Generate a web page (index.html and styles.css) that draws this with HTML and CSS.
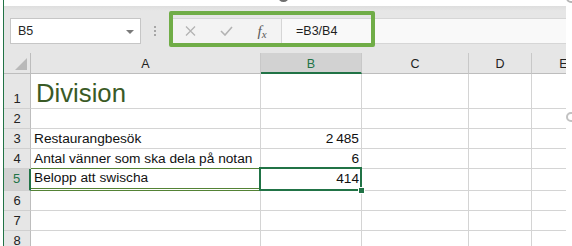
FILE: index.html
```html
<!DOCTYPE html>
<html lang="sv">
<head>
<meta charset="utf-8">
<title>Division</title>
<link rel="stylesheet" href="styles.css">
</head>
<body>
<div class="window">
  <div class="edge"></div>
  <div class="excel">
    <div class="topstrip"></div>
    <div class="toolbar">
      <div class="namebox"><span class="ref">B5</span><span class="caret"></span></div>
      <div class="dots"><i></i><i></i><i></i></div>
      <div class="fbar">
        <div class="fbtns">
          <span class="slot">
            <svg width="11" height="10" viewBox="0 0 11 10"><path d="M1 0.5 L10 9.5 M10 0.5 L1 9.5" stroke="#b3b3b3" stroke-width="1.3" fill="none"/></svg>
          </span>
          <span class="slot">
            <svg width="13" height="10" viewBox="0 0 13 10"><path d="M1 5 L5 9 L12 1" stroke="#b3b3b3" stroke-width="1.6" fill="none"/></svg>
          </span>
          <span class="slot fx"><span class="f">f</span><span class="x">x</span></span>
        </div>
        <div class="finput">=B3/B4</div>
      </div>
    </div>
    <div class="sheetwrap">
    <div class="sheet">
      <div class="corner">
        <svg width="12" height="12" viewBox="0 0 12 12"><polygon points="12,0 12,12 0,12" fill="#b9b9b9"/></svg>
      </div>
      <div class="colhead">A</div>
      <div class="colhead sel">B</div>
      <div class="colhead">C</div>
      <div class="colhead">D</div>
      <div class="colhead">E</div>

      <div class="rowhead">1</div>
      <div class="cell title">Division</div>
      <div class="cell"></div><div class="cell"></div><div class="cell"></div><div class="cell"></div>

      <div class="rowhead">2</div>
      <div class="cell"></div><div class="cell"></div><div class="cell"></div><div class="cell"></div><div class="cell"></div>

      <div class="rowhead">3</div>
      <div class="cell">Restaurangbesök</div>
      <div class="cell num">2&#8239;485</div>
      <div class="cell"></div><div class="cell"></div><div class="cell"></div>

      <div class="rowhead">4</div>
      <div class="cell total-above">Antal vänner som ska dela på notan</div>
      <div class="cell num">6</div>
      <div class="cell"></div><div class="cell"></div><div class="cell"></div>

      <div class="rowhead sel">5</div>
      <div class="cell total">Belopp att swischa</div>
      <div class="cell num active">414<span class="selbox"></span><span class="handle"></span></div>
      <div class="cell"></div><div class="cell"></div><div class="cell"></div>

      <div class="rowhead">6</div>
      <div class="cell"></div><div class="cell"></div><div class="cell"></div><div class="cell"></div><div class="cell"></div>

      <div class="rowhead">7</div>
      <div class="cell"></div><div class="cell"></div><div class="cell"></div><div class="cell"></div><div class="cell"></div>

      <div class="rowhead">8</div>
      <div class="cell"></div><div class="cell"></div><div class="cell"></div><div class="cell"></div><div class="cell"></div>
    </div>
    </div>
  </div>
  <div class="highlight"></div>
  <div class="ring ring-top"></div>
  <div class="ring ring-corner"></div>
  <div class="ring ring-side"></div>
</div>
</body>
</html>
```

FILE: styles.css
```css
* { box-sizing: border-box; }

html, body {
  margin: 0;
  padding: 0;
  background: #ffffff;
}

body {
  width: 572px;
  height: 246px;
  overflow: hidden;
  font-family: "Liberation Sans", Arial, sans-serif;
  color: #1a1a1a;
}

.window {
  position: relative;
  display: flex;
  width: 572px;
  height: 246px;
  overflow: hidden;
  background: #ffffff;
}

.edge {
  width: 4px;
  flex: none;
  border-left: 3px solid #ffffff;
  background: #217346;
}

.excel {
  width: 562px;
  flex: none;
  display: flex;
  flex-direction: column;
  overflow: hidden;
}

.topstrip {
  height: 6px;
  flex: none;
  background: #ffffff;
}

.toolbar {
  height: 47px;
  flex: none;
  display: flex;
  align-items: flex-start;
  padding: 12px 0 0 6px;
  background: linear-gradient(#dedede, #e6e6e6 5px);
}

.namebox {
  width: 131px;
  height: 26px;
  flex: none;
  background: #ffffff;
  border: 1px solid #c6c6c6;
  display: flex;
  align-items: center;
  justify-content: space-between;
  padding: 0 6px 0 7px;
  font-size: 12.5px;
  color: #262626;
}

.caret {
  width: 0;
  height: 0;
  border-left: 4px solid transparent;
  border-right: 4px solid transparent;
  border-top: 4px solid #7a7a7a;
  margin-top: 1px;
}

.dots {
  margin-left: 13px;
  padding-top: 8px;
  display: flex;
  flex-direction: column;
  gap: 2px;
}

.dots i {
  display: block;
  width: 2px;
  height: 2px;
  background: #a6a6a6;
}

.fbar {
  margin-left: 14px;
  flex: 1;
  height: 26px;
  display: flex;
  border-top: 1px solid #d6d6d6;
  border-bottom: 1px solid #d6d6d6;
  background: #f9f9f9;
}

.fbtns {
  width: 112px;
  flex: none;
  display: flex;
  padding-left: 2px;
  border-right: 1px solid #d6d6d6;
  background: #f3f3f3;
}

.slot {
  width: 36px;
  display: flex;
  align-items: center;
  justify-content: center;
}

.fx {
  font-family: "Liberation Serif", "Times New Roman", serif;
  font-style: italic;
  color: #5a5a5a;
  padding-top: 1px;
}

.fx .f { font-size: 15px; }
.fx .x { font-size: 11px; position: relative; top: 2px; }

.finput {
  flex: 1;
  display: flex;
  align-items: center;
  padding-left: 14px;
  font-size: 12.5px;
  color: #1f1f1f;
}

.sheetwrap {
  width: 562px;
  flex: 1;
  overflow: hidden;
}

.sheet {
  display: grid;
  grid-template-columns: 27px 230px 101px 107px 63px 64px;
  grid-template-rows: 21px 35px 20px 20px 20px 22px 20px 20px 20px;
  width: 592px;
}

.corner {
  background: #e6e6e6;
  border-right: 1px solid #bdbdbd;
  border-bottom: 1px solid #bdbdbd;
  display: flex;
  align-items: flex-end;
  justify-content: flex-end;
  padding: 0 3px 3px 0;
}

.colhead {
  background: #e6e6e6;
  border-right: 1px solid #c8c8c8;
  border-bottom: 1px solid #bdbdbd;
  display: flex;
  align-items: center;
  justify-content: center;
  font-size: 12.5px;
  color: #222222;
  padding-top: 1px;
}

.colhead.sel {
  background: #d2d2d2;
  color: #217346;
  border-bottom: 2px solid #217346;
  padding-top: 2px;
}

.rowhead {
  background: #e6e6e6;
  border-right: 1px solid #bdbdbd;
  border-bottom: 1px solid #d0d0d0;
  display: flex;
  align-items: flex-end;
  justify-content: center;
  font-size: 13px;
  line-height: 16px;
  color: #222222;
  padding-bottom: 1px;
}

.rowhead.sel {
  background: #d2d2d2;
  color: #217346;
  border-right: 2px solid #217346;
  padding-bottom: 3px;
}

.cell {
  position: relative;
  border-right: 1px solid #d4d4d4;
  border-bottom: 1px solid #d4d4d4;
  display: flex;
  align-items: flex-end;
  padding: 0 2px 1px 3px;
  font-size: 13.7px;
  line-height: 16px;
  white-space: nowrap;
  color: #111111;
}

.cell.title {
  font-size: 25.7px;
  line-height: 30px;
  padding-left: 5px;
  padding-bottom: 0;
  color: #3a5a26;
}

.cell.num {
  justify-content: flex-end;
}

.cell.total-above {
  border-bottom: 1px solid #548235;
}

.cell.total {
  border-bottom: 3px double #548235;
  padding-bottom: 2px;
}

.cell.active {
  padding-bottom: 3px;
  z-index: 2;
}

.selbox {
  position: absolute;
  left: -2px;
  top: -2px;
  width: 103px;
  height: 24px;
  border: 2px solid #217346;
}

.handle {
  position: absolute;
  left: 97px;
  top: 18px;
  width: 7px;
  height: 7px;
  background: #217346;
  border: 1px solid #ffffff;
}

.highlight {
  position: absolute;
  left: 169px;
  top: 11px;
  width: 206px;
  height: 36px;
  border: 4px solid #70ad47;
  border-radius: 2px;
}

.ring {
  position: absolute;
  border-radius: 50%;
}

.ring-top {
  left: 278px;
  top: -9px;
  width: 11px;
  height: 11px;
  border: 2px solid #6f6f6f;
}

.ring-corner {
  left: 566px;
  top: -7px;
  width: 10px;
  height: 10px;
  border: 2px solid #b5b5b5;
}

.ring-side {
  left: 566px;
  top: 112px;
  width: 10px;
  height: 10px;
  border: 2px solid #c2c2c2;
}
```
